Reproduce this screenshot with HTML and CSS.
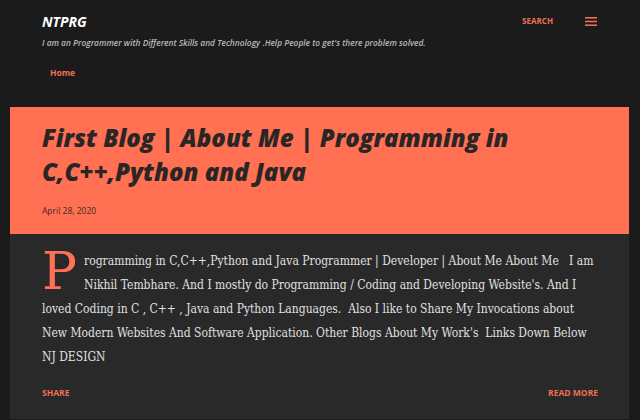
FILE: index.html
```html
<!DOCTYPE html>
<html>
<head>
<meta charset="utf-8">
<link rel="stylesheet" href="styles.css">
</head>
<body>
<header class="site-header">
  <div class="top-row">
    <div class="brand">
      <h1 class="site-title">NTPRG</h1>
      <p class="tagline">I am an Programmer with Different Skills and Technology .Help People to get's there problem solved.</p>
    </div>
    <div class="actions">
      <span class="search">SEARCH</span>
      <svg class="menu" width="12" height="9" viewBox="0 0 12 9"><rect x="0" y="0" width="12" height="1.6" fill="#f06e52"/><rect x="0" y="3.7" width="12" height="1.6" fill="#f06e52"/><rect x="0" y="7.4" width="12" height="1.6" fill="#f06e52"/></svg>
    </div>
  </div>
  <nav class="nav"><span class="nav-link">Home</span></nav>
</header>
<article class="post">
  <div class="post-head">
    <h2 class="post-title">First Blog | About Me | Programming in C,C++,Python and Java</h2>
    <div class="post-date">April 28, 2020</div>
  </div>
  <div class="post-body">
    <p class="snippet"><span class="dropcap">P</span>rogramming in C,C++,Python and Java Programmer | Developer | About Me About Me &nbsp; I am Nikhil Tembhare. And I mostly do Programming / Coding and Developing Website's. And I loved Coding in C , C++ , Java and Python Languages. &nbsp;Also I like to Share My Invocations about New Modern Websites And Software Application. Other Blogs About My Work's &nbsp;Links Down Below NJ DESIGN</p>
    <div class="post-foot">
      <span class="foot-link">SHARE</span>
      <span class="foot-link">READ MORE</span>
    </div>
  </div>
</article>
</body>
</html>
```
FILE: styles.css
```css
html, body {
  margin: 0;
  padding: 0;
  background: #1c1b1c;
  height: 420px;
  overflow: hidden;
}
body {
  font-family: "Open Sans", sans-serif;
}
.site-header {
  padding: 13px 43px 0 42px;
}
.top-row {
  display: flex;
  justify-content: space-between;
  align-items: flex-start;
}
.site-title {
  margin: 0;
  font-size: 14px;
  font-weight: 700;
  font-style: italic;
  color: #ffffff;
  line-height: 18px;
}
.tagline {
  margin: 6px 0 0;
  font-size: 8.4px;
  font-style: italic;
  font-weight: 600;
  color: #b8b8b8;
  line-height: 12px;
}
.actions {
  display: flex;
  align-items: center;
  gap: 32px;
  padding-top: 2px;
}
.search {
  font-size: 8px;
  font-weight: 700;
  color: #f06e52;
  line-height: 12px;
}
.menu {
  display: block;
}
.nav {
  padding: 15px 0 0 8px;
  height: 34px;
  line-height: 12px;
}
.nav-link {
  font-size: 8.5px;
  font-weight: 700;
  color: #f06e52;
}
.post {
  margin: 9px 11px 0 10px;
}
.post-head {
  background: #ff7152;
  padding: 14px 32px 17px 32px;
}
.post-title {
  margin: 0;
  font-size: 24px;
  font-weight: 800;
  font-style: italic;
  line-height: 34px;
  color: #2a2626;
}
.post-date {
  margin-top: 16px;
  font-size: 8.5px;
  color: #3a2a26;
  line-height: 12px;
}
.post-body {
  background: #292929;
  padding: 15px 31px 20px 32px;
}
.snippet {
  margin: 0;
  font-family: "DejaVu Serif Condensed", "Liberation Serif", serif;
  font-size: 12px;
  line-height: 24px;
  color: #e0e0e0;
}
.dropcap {
  float: left;
  font-family: "DejaVu Serif", serif;
  font-size: 52px;
  line-height: 44px;
  height: 44px;
  color: #ff7152;
  margin: 0 7px 0 0;
}
.post-foot {
  display: flex;
  justify-content: space-between;
  margin-top: 18px;
  line-height: 12px;
}
.foot-link {
  font-size: 8.5px;
  font-weight: 700;
  color: #f06e52;
}
```
